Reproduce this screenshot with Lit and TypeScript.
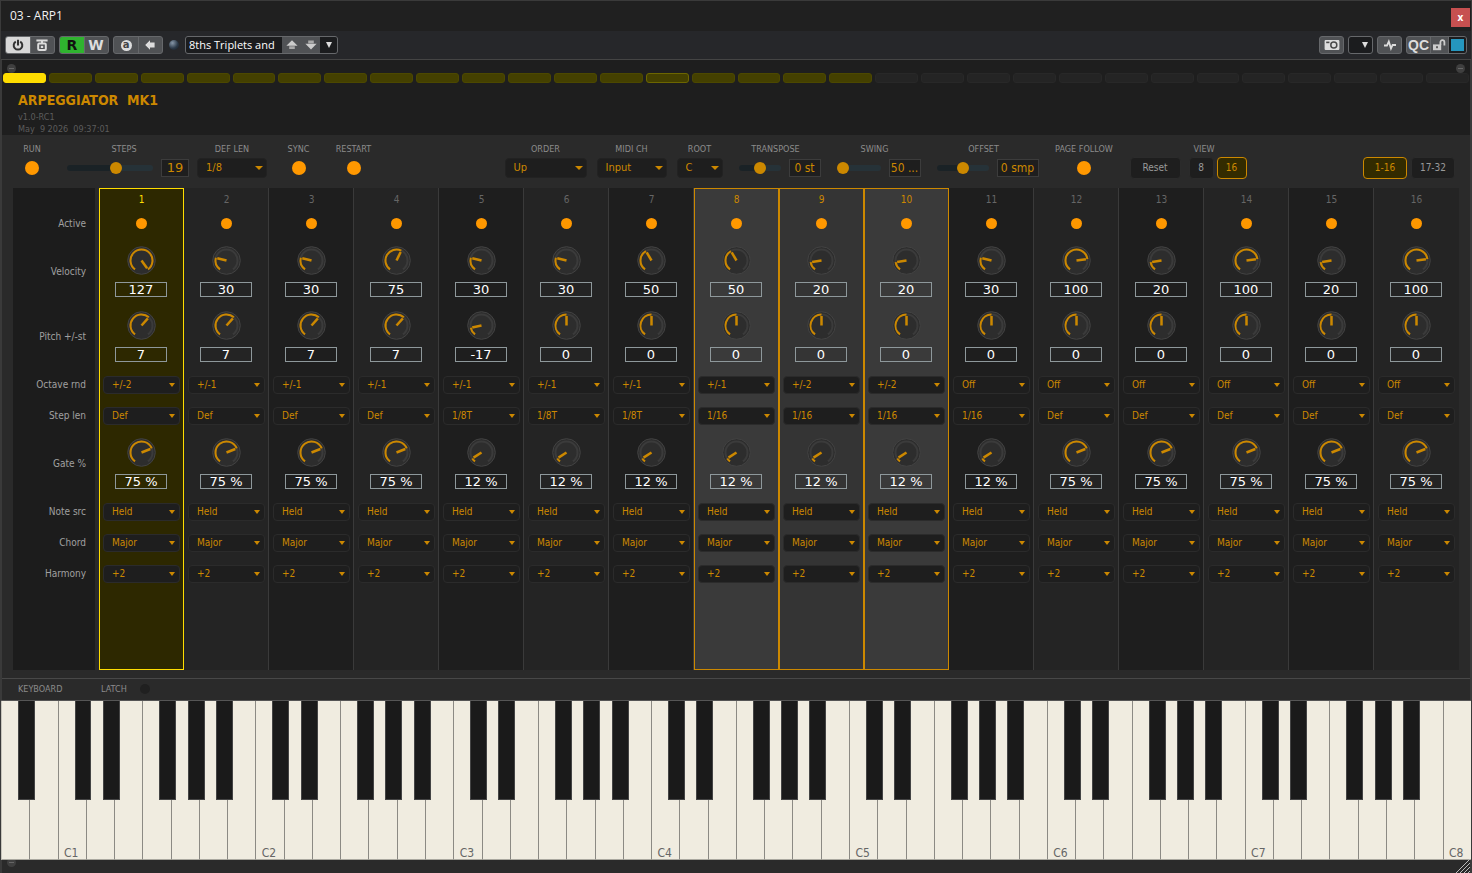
import { LitElement, html, svg, css } from "lit";
import { customElement, property } from "lit/decorators.js";
import { classMap } from "lit/directives/class-map.js";

const FONT = css`"DejaVu Sans Condensed", "DejaVu Sans", Verdana, sans-serif`;

interface Step {
  velocity: number;
  pitch: number;
  octave: string;
  length: string;
  gate: number;
}

const VELOCITY = [127, 30, 30, 75, 30, 30, 50, 50, 20, 20, 30, 100, 20, 100, 20, 100];
const PITCH = [7, 7, 7, 7, -17, 0, 0, 0, 0, 0, 0, 0, 0, 0, 0, 0];
const OCTAVE = ["+/-2", "+/-1", "+/-1", "+/-1", "+/-1", "+/-1", "+/-1", "+/-1", "+/-2", "+/-2", "Off", "Off", "Off", "Off", "Off", "Off"];
const LENGTH = ["Def", "Def", "Def", "Def", "1/8T", "1/8T", "1/8T", "1/16", "1/16", "1/16", "1/16", "Def", "Def", "Def", "Def", "Def"];
const GATE = [75, 75, 75, 75, 12, 12, 12, 12, 12, 12, 12, 75, 75, 75, 75, 75];

const STEPS: Step[] = VELOCITY.map((velocity, i) => ({
  velocity,
  pitch: PITCH[i],
  octave: OCTAVE[i],
  length: LENGTH[i],
  gate: GATE[i],
}));

const SELECTED = [8, 9, 10];
const PLAYING = 1;

@customElement("arp-select")
class ArpSelect extends LitElement {
  @property() label = "";
  @property() value = "";
  static styles = css`
    :host { display: grid; height: 18px; color: #cc8800; font: 10px/16px ${FONT}; }
    select, .caret { grid-area: 1 / 1; }
    select {
      appearance: none; width: 100%; min-width: 0; height: 100%; margin: 0; padding: 0 8px;
      border: 1px solid #2b2b2b; border-radius: 4px; outline: 0;
      background: #1e1e1e; color: inherit; font: inherit;
    }
    .caret {
      align-self: center; justify-self: end; margin-right: 5px; pointer-events: none;
      border: 3px solid transparent; border-top: 4px solid currentColor; border-bottom: 0;
    }
    :host([large]) { height: 20px; font-size: 11px; }
    :host([large]) .caret { border-left-width: 4px; border-right-width: 4px; margin-right: 4px; }
    :host([large]) select { border-color: #222; }
  `;
  render() {
    return html`<select aria-label=${this.label}><option>${this.value}</option></select><span class="caret"></span>`;
  }
}

@customElement("arp-knob")
class ArpKnob extends LitElement {
  @property() label = "";
  @property({ type: Number }) value = 0;
  @property({ type: Number }) min = 0;
  @property({ type: Number }) max = 100;
  @property() unit = "";
  static styles = css`
    :host { display: flex; flex-direction: column; align-items: center; gap: 7px; }
    .dial { display: grid; width: 29px; height: 29px; }
    svg, .dial input { grid-area: 1 / 1; width: 29px; height: 29px; margin: 0; }
    .dial input { opacity: 0; }
    .value {
      box-sizing: border-box; width: 52px; height: 15px; margin: 0 1px 0 0; padding: 0; border: 1px solid #8e989b;
      outline: 0; background: transparent; color: #fff; text-align: center;
      font: 13px/13px "DejaVu Sans", Verdana, sans-serif;
    }
  `;
  private point(deg: number, r: number) {
    const a = (deg * Math.PI) / 180;
    return `${(14.5 + r * Math.sin(a)).toFixed(2)} ${(14.5 - r * Math.cos(a)).toFixed(2)}`;
  }
  private arc(to: number) {
    return `M${this.point(-144, 11)}A11 11 0 ${to + 144 > 180 ? 1 : 0} 1 ${this.point(to, 11)}`;
  }
  render() {
    const angle = -144 + (288 * (this.value - this.min)) / (this.max - this.min);
    return html`
      <span class="dial">
        <svg viewBox="0 0 29 29" fill="none">
          ${svg`<circle cx="14.5" cy="14.5" r="13.8" fill="#2d2d2d" stroke="#434343"/>
          <path d=${this.arc(144)} stroke="#3b3b3b" stroke-width="2"/>
          <path d=${this.arc(angle)} stroke="#cc8800" stroke-width="2"/>
          <path d=${`M14.5 14.5L${this.point(angle, 9.5)}`} stroke="#cc8800" stroke-width="2.5"/>`}
        </svg>
        <input type="range" aria-label=${this.label} min=${this.min} max=${this.max} .value=${String(this.value)} />
      </span>
      <input class="value" type="text" aria-label="${this.label} value" .value=${`${this.value}${this.unit}`} />
    `;
  }
}

@customElement("arp-slider")
class ArpSlider extends LitElement {
  @property() label = "";
  @property({ type: Number }) percent = 0;
  @property() text = "";
  @property({ type: Number }) track = 42;
  @property({ type: Number }) box = 32;
  static styles = css`
    :host { display: flex; align-items: center; gap: 8px; padding-left: 8px; }
    .range {
      appearance: none; height: 12px; margin: 0; background: transparent; outline: 0;
    }
    .range::-webkit-slider-runnable-track {
      height: 6px; border-radius: 3px;
      background: linear-gradient(90deg, #1a2226 var(--p), #263238 var(--p));
    }
    .range::-webkit-slider-thumb {
      appearance: none; width: 12px; height: 12px; margin-top: -3px; border-radius: 50%; background: #cc8800;
    }
    .box {
      box-sizing: border-box; height: 18px; padding: 0; border: 1px solid #3c3c3c; outline: 0;
      background: #1e1e1e; color: #cc8800; text-align: center; font: 12px/16px ${FONT};
    }
    :host([wide]) .box { font: 13px/16px "DejaVu Sans", Verdana, sans-serif; }
  `;
  render() {
    return html`
      <input class="range" type="range" aria-label=${this.label} .value=${String(this.percent)}
        style="width:${this.track}px;--p:${this.percent}%" />
      <input class="box" type="text" aria-label="${this.label} value" .value=${this.text} style="width:${this.box}px" />
    `;
  }
}

@customElement("arp-step")
class ArpStep extends LitElement {
  @property({ type: Number }) index = 1;
  @property({ attribute: false }) step!: Step;
  static styles = css`
    :host { display: block; font: 10px/12px ${FONT}; color: #666; }
    .num { height: 24px; line-height: 24px; text-align: center; }
    .active { height: 23px; margin-bottom: 4px; }
    .row { display: flex; align-items: center; justify-content: center; }
    .knob { height: 65px; }
    .pick { height: 31px; padding: 0 4px; }
    .pick arp-select { flex: 1; min-width: 0; }
    .led { appearance: none; width: 11px; height: 11px; margin: 0; border-radius: 50%; background: #ff9800; }
  `;
  private pick(label: string, value: string) {
    return html`<div class="row pick"><arp-select .label="${label} ${this.index}" .value=${value}></arp-select></div>`;
  }
  private knob(label: string, value: number, min: number, max: number, unit = "") {
    return html`<div class="row knob">
      <arp-knob .label="${label} ${this.index}" .value=${value} .min=${min} .max=${max} .unit=${unit}></arp-knob>
    </div>`;
  }
  render() {
    const s = this.step;
    return html`
      <div class="num">${this.index}</div>
      <div class="row active"><input class="led" type="checkbox" checked aria-label="Active ${this.index}" /></div>
      ${this.knob("Velocity", s.velocity, 0, 127)}
      ${this.knob("Pitch", s.pitch, -24, 24)}
      ${this.pick("Octave rnd", s.octave)}
      ${this.pick("Step len", s.length)}
      ${this.knob("Gate", s.gate, 5, 100, " %")}
      ${this.pick("Note src", "Held")}
      ${this.pick("Chord", "Major")}
      ${this.pick("Harmony", "+2")}
    `;
  }
}

@customElement("arp-keyboard")
class ArpKeyboard extends LitElement {
  static styles = css`
    :host { display: flex; height: 160px; border-top: 1px solid #555; box-sizing: border-box; }
    .key { position: relative; flex: 1; display: flex; min-width: 0; }
    button { margin: 0; padding: 0; border: 0; font: 12px/12px ${FONT}; }
    .white {
      flex: 1; min-width: 0; display: flex; align-items: flex-end; justify-content: center;
      padding-right: 2px; background: #f0ece0; color: #666; border-left: 1px solid #8c8a84;
      border-bottom: 1px solid #aaa89f;
    }
    .key:first-child .white { border-left-color: #c8c5bb; }
    .black {
      position: absolute; z-index: 1; top: 0; left: -40%; width: 60%; height: 62%;
      background: #1a1a1a; border: 1px solid #444; border-top: 0;
    }
  `;
  render() {
    const names = "ABCDEFG";
    return Array.from({ length: 52 }, (_, i) => {
      const name = names[i % 7];
      const octave = Math.floor((i + 5) / 7);
      const sharpBefore = i > 0 && !"CF".includes(name);
      return html`<div class="key">
        <button class="white" aria-label="${name}${octave}">${name === "C" ? `C${octave}` : ""}</button>
        ${sharpBefore ? html`<button class="black" aria-label="${names[(i + 6) % 7]} sharp"></button>` : ""}
      </div>`;
    });
  }
}

const icon = {
  power: svg`<path d="M4.8 3.6A4.3 4.3 0 1 0 9.2 3.6M7 1.8V7.4" stroke="#333" stroke-width="2" fill="none"/>`,
  bypass: svg`<path d="M1.4 2.6H12.6M7 2.6V6" stroke="#ddd" stroke-width="2" fill="none"/><rect x="3.2" y="5.6" width="7.6" height="6.4" rx="1" stroke="#ddd" stroke-width="2" fill="none"/><rect x="5.8" y="7.8" width="2.4" height="2.2" fill="#ddd"/>`,
  left: svg`<path d="M2.2 7L7 2.2V4.4H11.6V9.6H7V11.8Z" fill="#ddd"/>`,
  up: svg`<path d="M7 2.2L12.6 7.8H1.4Z" fill="#ccc"/><path d="M4.2 8.2H9.8V11H4.2Z" fill="#aaa"/>`,
  down: svg`<path d="M7 11.4L12.6 5.8H1.4Z" fill="#ccc"/><path d="M4.2 2.6H9.8V5.4H4.2Z" fill="#aaa"/>`,
  caret: svg`<path d="M4 4H10L7 10Z" fill="#ddd"/>`,
  camera: svg`<rect x="-.4" y="2" width="14.8" height="10" rx="1" fill="#ddd"/><circle cx="8.8" cy="7" r="3" stroke="#4a4a4a" stroke-width="1.5" fill="#ddd"/><rect x="1.2" y="3.6" width="3.2" height="1.6" fill="#4a4a4a"/>`,
  pulse: svg`<path d="M1 7.5H4L5.8 3.5L8 10.5L9.6 7H13" stroke="#ddd" stroke-width="1.8" fill="none"/>`,
  lock: svg`<rect x="1" y="6.4" width="8.2" height="5.8" fill="#ccc"/><path d="M8.4 7V4.2A2 2 0 0 1 12.4 4.2V7.4" stroke="#ccc" stroke-width="1.8" fill="none"/><rect x="4.2" y="8.2" width="1.6" height="2" fill="#444"/>`,
};
const glyph = (g: unknown) => html`<svg class="glyph" viewBox="0 0 14 14">${g}</svg>`;

@customElement("app-root")
class AppRoot extends LitElement {
  static styles = css`
    :host {
      display: flex; flex-direction: column; box-sizing: border-box; min-height: 100vh;
      padding: 1px 1px 0 1px; background: #3a3a3a; color: #8c8c8c; font: 9px/12px ${FONT};
    }
    button { margin: 0; padding: 0; border: 0; font: inherit; color: inherit; background: none; }
    .title {
      display: flex; justify-content: space-between; align-items: center; height: 30px; padding: 0 1px 0 9px;
      background: #202020; color: #f2f2f2; font: 12px/16px "Open Sans", "Noto Sans", sans-serif;
    }
    .title h1 { margin: 0; font: inherit; }
    .close { width: 19px; height: 19px; margin-top: 3px; background: #c75050; color: #fff; font: bold 10px/17px "Open Sans", sans-serif; }
    .tools {
      display: flex; align-items: center; gap: 4px; height: 28px; padding: 0 4px; background: #26272a;
      border-bottom: 1px solid #444; color: #ddd; font: 12px/16px "Open Sans", "Noto Sans", sans-serif;
    }
    .set { display: flex; box-sizing: border-box; height: 18px; border: 1px solid #66686b; border-radius: 3px; overflow: hidden; background: #505255; }
    .set > * { display: flex; align-items: center; justify-content: center; box-sizing: border-box; width: 24px; }
    .set > * + * { box-shadow: inset 1px 0 #66686b; }
    .set > :only-child { width: 23px; }
    .glyph { flex: none; width: 14px; height: 14px; overflow: visible; }
    .set .on { background: #d8d8d8; }
    .set .read { background: #2fb32f; color: #111; }
    .set .letter { font: bold 14px/16px "DejaVu Sans", sans-serif; }
    .disc { display: grid; place-items: center; width: 11px; height: 11px; border-radius: 50%; background: #ddd; color: #444; font: bold 10px/10px "DejaVu Sans", sans-serif; }
    .lamp { width: 10px; height: 10px; margin: 0 2px; border-radius: 50%; background: radial-gradient(circle at 35% 30%, #8797a8, #2c3a49 55%, #15191d); }
    .preset .name { width: 96px; padding: 0 0 0 3px; border: 0; outline: 0; background: #1b1c1e; color: #fff; font: 11px/16px "Open Sans", "Noto Sans", sans-serif; text-align: left; }
    .preset button { width: 19px; box-shadow: none; }
    .preset .menu, .set.drop, .set .focus { background: #1b1c1e; }
    .preset .menu { width: 17px; }
    .drop button { padding-left: 8px; }
    .push { margin-left: auto; }
    .qc { font: bold 14px/16px "Liberation Sans", sans-serif; }
    .quick > * { width: 18px; }
    .quick .qc { width: 23px; }
    .swatch { width: 13px; height: 12px; background: #2596be; }
    .plugin { position: relative; flex: 1; display: flex; flex-direction: column; background: #2a2a2a; margin: 0 1px; }
    .pin { position: absolute; width: 9px; height: 9px; border-radius: 50%; background: #3f3f3f; }
    .pin::after { content: ""; position: absolute; left: 2px; top: 4px; width: 5px; height: 1px; background: #666; }
    .nw { left: 5px; top: 4px; } .ne { right: 5px; top: 4px; } .sw { left: 5px; bottom: 6px; }
    .head { height: 75px; box-sizing: border-box; padding-top: 13px; background: #1e1e1e; color: #5c5c5c; }
    .strip { position: relative; display: flex; gap: 3px; padding: 0 1px; height: 10px; }
    .strip span { flex: 1; box-sizing: border-box; border: 1px solid #282828; border-radius: 3px; background: #242424; }
    .strip .used { background: #444000; border-color: #4c4800; }
    .strip .mark { border-color: #6c6600; }
    .strip .now { background: #ffdd00; border-color: #ffdd00; }
    .brand { padding: 10px 16px 0; }
    .brand h2 { margin: 0 0 3px; color: #cc8800; font: bold 14px/15px ${FONT}; white-space: pre; }
    .brand p { margin: 0; white-space: pre; }
    .bar { display: flex; justify-content: space-between; height: 53px; padding: 0 15px 0 16px; box-sizing: border-box; }
    .cluster { display: flex; gap: 8px; }
    .cluster.mid { padding-left: 11px; }
    .cluster .picks { display: flex; gap: 10px; }
    .group { display: flex; flex-direction: column; padding-top: 8px; text-align: center; white-space: nowrap; }
    .group .ctl { display: flex; align-items: center; justify-content: center; height: 25px; }
    .ctl arp-select { flex: 1; min-width: 0; }
    .run { width: 28px; margin-right: 5px; } .toggle { width: 47px; } .follow { width: 75px; }
    .w46 { width: 46px; } .w70 { width: 70px; } .w82 { width: 82px; }
    .led { appearance: none; width: 14px; height: 14px; margin: 0; border-radius: 50%; background: #ff9800; }
    .btn {
      box-sizing: border-box; height: 22px; border: 1px solid #2b2b2b; border-radius: 4px;
      background: #1e1e1e; color: #999; font-size: 10px;
    }
    .btn.sel { border-color: #cc8800; background: #332b00; color: #cc8800; }
    .reset { width: 51px; } .eight { width: 25px; } .sixteen { width: 30px; } .page { width: 44px; }
    .view .ctl { gap: 3px; } .view .cap { text-align: left; padding-left: 5px; } .pages .ctl { gap: 4px; }
    .grid { flex: 1; display: flex; gap: 4px; padding: 0 11px 8px; min-height: 420px; }
    .names { width: 82px; box-sizing: border-box; padding: 24px 9px 0 0; background: #1c1c1c; color: #a0a0a0; text-align: right; font-size: 10px; }
    .names div { display: flex; align-items: center; justify-content: flex-end; height: 31px; }
    .names .tall { height: 65px; } .names .short { height: 23px; margin-bottom: 4px; }
    .steps { flex: 1; display: grid; grid-template-columns: repeat(16, minmax(0, 1fr)); }
    arp-step { background: #1e1e1e; box-shadow: inset -1px 0 #3a3a3a; }
    arp-step:nth-child(even) { background: #242424; }
    arp-step:last-child { box-shadow: none; }
    arp-step.sel { background: #343434; color: #cc8800; box-shadow: inset 0 0 0 1px #cc8800; }
    arp-step.sel:nth-child(even) { background: #3a3a3a; }
    arp-step.now { background: #2d2800; color: #ffdd00; box-shadow: inset 0 0 0 1px #ffdd00; }
    .kbhead { display: flex; align-items: center; height: 20px; padding: 0 0 1px 16px; border-top: 1px solid #484848; }
    .kbhead span { width: 83px; }
    .latch { display: flex; align-items: center; gap: 13px; }
    .latch input { appearance: none; width: 10px; height: 10px; margin: 0; border-radius: 50%; background: #202020; }
    .foot { display: flex; justify-content: flex-end; height: 13px; }
    .grip { width: 15px; height: 15px; margin-top: -2px; position: relative; }
    arp-keyboard { margin: 0 -1px; }
  `;
  private cap(label: string, width: string, body: unknown) {
    return html`<div class="group ${width}"><div class="cap">${label}</div><div class="ctl">${body}</div></div>`;
  }
  private led(label: string) {
    return html`<input class="led" type="checkbox" checked aria-label=${label} />`;
  }
  private pick(label: string, width: string, value: string) {
    return this.cap(label, width, html`<arp-select large .label=${label} .value=${value}></arp-select>`);
  }
  render() {
    return html`
      <header class="title"><h1>03 - ARP1</h1><button class="close" aria-label="Close">x</button></header>
      <nav class="tools">
        <div class="set"><button class="on" aria-label="Power">${glyph(icon.power)}</button><button aria-label="Bypass">${glyph(icon.bypass)}</button></div>
        <div class="set"><button class="read letter">R</button><button class="letter">W</button></div>
        <div class="set"><button aria-label="Compare"><span class="disc">a</span></button><button aria-label="Back">${glyph(icon.left)}</button></div>
        <span class="lamp"></span>
        <div class="set preset">
          <input class="name" type="text" aria-label="Preset" value="8ths Triplets and" />
          <button aria-label="Previous">${glyph(icon.up)}</button><button aria-label="Next">${glyph(icon.down)}</button>
          <button class="menu" aria-label="Presets">${glyph(icon.caret)}</button>
        </div>
        <div class="set push"><button aria-label="Snapshot">${glyph(icon.camera)}</button></div>
        <div class="set drop"><button aria-label="Snapshots">${glyph(icon.caret)}</button></div>
        <div class="set"><button aria-label="Activity">${glyph(icon.pulse)}</button></div>
        <div class="set quick"><button class="qc">QC</button><button aria-label="Lock">${glyph(icon.lock)}</button><button class="focus" aria-label="Focus"><span class="swatch"></span></button></div>
      </nav>
      <main class="plugin">
        <span class="pin nw"></span><span class="pin ne"></span><span class="pin sw"></span>
        <section class="head">
          <div class="strip">
            ${Array.from({ length: 32 }, (_, i) => html`<span class=${classMap({ used: i < 19, now: i === 0, mark: i === 14 })}></span>`)}
          </div>
          <div class="brand"><h2>ARPEGGIATOR  MK1</h2><p>v1.0-RC1</p><p>May  9 2026  09:37:01</p></div>
        </section>
        <section class="bar">
          <div class="cluster">
            ${this.cap("RUN", "run", this.led("Run"))}
            ${this.cap("STEPS", "", html`<arp-slider wide .label=${"Steps"} .percent=${58} .text=${"19"} .track=${86} .box=${28}></arp-slider>`)}
            ${this.pick("DEF LEN", "w70", "1/8")}
            ${this.cap("SYNC", "toggle", this.led("Sync"))}
            ${this.cap("RESTART", "toggle", this.led("Restart"))}
          </div>
          <div class="cluster mid">
            <div class="picks">
              ${this.pick("ORDER", "w82", "Up")}${this.pick("MIDI CH", "w70", "Input")}${this.pick("ROOT", "w46", "C")}
            </div>
            ${this.cap("TRANSPOSE", "", html`<arp-slider .label=${"Transpose"} .percent=${50} .text=${"0 st"} .track=${42} .box=${32}></arp-slider>`)}
            ${this.cap("SWING", "", html`<arp-slider .label=${"Swing"} .percent=${0} .text=${"50 ..."} .track=${44} .box=${32}></arp-slider>`)}
            ${this.cap("OFFSET", "", html`<arp-slider .label=${"Offset"} .percent=${50} .text=${"0 smp"} .track=${52} .box=${42}></arp-slider>`)}
            ${this.cap("PAGE FOLLOW", "follow", this.led("Page follow"))}
            ${this.cap("\u00a0", "", html`<button class="btn reset">Reset</button>`)}
            ${this.cap("VIEW", "view", html`<button class="btn eight">8</button><button class="btn sel sixteen">16</button>`)}
          </div>
          <div class="cluster">
            ${this.cap("\u00a0", "pages", html`<button class="btn sel page">1-16</button><button class="btn page">17-32</button>`)}
          </div>
        </section>
        <section class="grid">
          <div class="names">
            <div class="short">Active</div><div class="tall">Velocity</div><div class="tall">Pitch +/-st</div>
            <div>Octave rnd</div><div>Step len</div><div class="tall">Gate %</div>
            <div>Note src</div><div>Chord</div><div>Harmony</div>
          </div>
          <div class="steps">
            ${STEPS.map((s, i) => html`<arp-step class=${classMap({ now: i + 1 === PLAYING, sel: SELECTED.includes(i + 1) })} .index=${i + 1} .step=${s}></arp-step>`)}
          </div>
        </section>
        <section class="kbhead"><span>KEYBOARD</span><label class="latch">LATCH <input type="checkbox" /></label></section>
        <arp-keyboard></arp-keyboard>
        <footer class="foot">
          <svg class="grip" viewBox="0 0 15 15"><path d="M1 15L15 1M5 15L15 5M9 15L15 9M13 15L15 13" stroke="#bbb"/></svg>
        </footer>
      </main>
    `;
  }
}
